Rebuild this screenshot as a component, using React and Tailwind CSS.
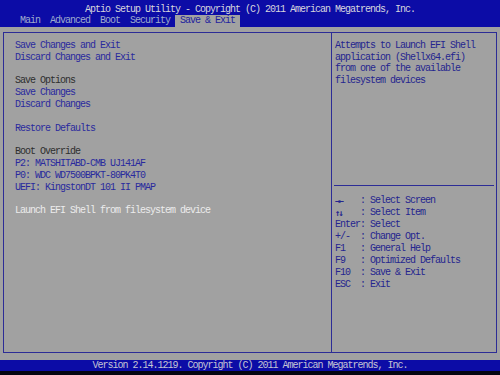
const tabs = ['Main', 'Advanced', 'Boot', 'Security', 'Save & Exit'];

const leftItems = [
  { text: 'Save Changes and Exit', kind: 'item' },
  { text: 'Discard Changes and Exit', kind: 'item' },
  { text: '', kind: 'blank' },
  { text: 'Save Options', kind: 'head' },
  { text: 'Save Changes', kind: 'item' },
  { text: 'Discard Changes', kind: 'item' },
  { text: '', kind: 'blank' },
  { text: 'Restore Defaults', kind: 'item' },
  { text: '', kind: 'blank' },
  { text: 'Boot Override', kind: 'head' },
  { text: 'P2: MATSHITABD-CMB UJ141AF', kind: 'item' },
  { text: 'P0: WDC WD7500BPKT-80PK4T0', kind: 'item' },
  { text: 'UEFI: KingstonDT 101 II PMAP', kind: 'item' },
  { text: '', kind: 'blank' },
  { text: 'Launch EFI Shell from filesystem device', kind: 'sel' },
];

const helpLines = [
  'Attempts to Launch EFI Shell',
  'application (Shellx64.efi)',
  'from one of the available',
  'filesystem devices',
];

const keys = [
  ['→←', 'Select Screen', true],
  ['↑↓', 'Select Item', true],
  ['Enter', 'Select'],
  ['+/-', 'Change Opt.'],
  ['F1', 'General Help'],
  ['F9', 'Optimized Defaults'],
  ['F10', 'Save & Exit'],
  ['ESC', 'Exit'],
];

const colorFor = {
  item: 'text-[#2a2a9e]',
  head: 'text-[#2e2e2e]',
  sel: 'text-[#ececec]',
  blank: '',
};

export default function App() {
  return (
    <div className="w-[500px] h-[375px] bg-[#a1a1a1] flex flex-col overflow-hidden font-['Liberation_Mono',monospace] text-[10px] tracking-[-1px] whitespace-pre">
      {/* title + tabs */}
      <header className="h-[27px] bg-[#0c0ca6] flex flex-col">
        <div className="h-[14px] leading-[14px] pt-[3px] text-center text-[#d6d6de]">
          Aptio Setup Utility - Copyright (C) 2011 American Megatrends, Inc.
        </div>
        <div className="flex pl-[15px] mt-auto h-[12px] leading-[12px]">
          {tabs.map((t) => (
            <span
              key={t}
              className={
                t === 'Save & Exit'
                  ? 'px-[5px] bg-[#a1a1a1] text-[#1e1e9e]'
                  : 'px-[5px] text-[#9eabcc]'
              }
            >
              {t}
            </span>
          ))}
        </div>
      </header>

      <main className="flex-1 px-[3px] pt-[5px] pb-[7px]">
        <div className="h-full border border-[#2c2c96] flex">
          <div className="w-[328px] border-r border-[#2c2c96] pl-[11px] pt-[7px] leading-[11.8px]">
            {leftItems.map((l, i) => (
              <div key={i} className={`h-[11.8px] ${colorFor[l.kind]}`}>
                {l.text}
              </div>
            ))}
          </div>

          <div className="flex-1 flex flex-col">
            <div className="h-[153px] mx-[2px] border-b border-[#2c2c96] pl-[1px] pt-[7px] leading-[11.7px] text-[#25258f]">
              {helpLines.map((h) => (
                <div key={h}>{h}</div>
              ))}
            </div>
            <div className="pl-[3px] pt-[9px] leading-[12px] text-[#25258f]">
              {keys.map(([k, v, arrow]) => (
                <div key={k} className="flex h-[12px]">
                  {arrow ? (
                    <span className="w-[25px] font-['DejaVu_Sans_Mono',monospace] font-bold text-[9px] tracking-[-2px]">
                      {k}
                    </span>
                  ) : (
                    <span className="w-[25px]">{k}</span>
                  )}
                  <span>{': ' + v}</span>
                </div>
              ))}
            </div>
          </div>
        </div>
      </main>

      <footer className="h-[11px] bg-[#0c0ca6] leading-[11px] text-center text-[#c4c4d4]">
        Version 2.14.1219. Copyright (C) 2011 American Megatrends, Inc.
      </footer>
      <div className="h-[4px] bg-[#050510]" />
    </div>
  );
}
